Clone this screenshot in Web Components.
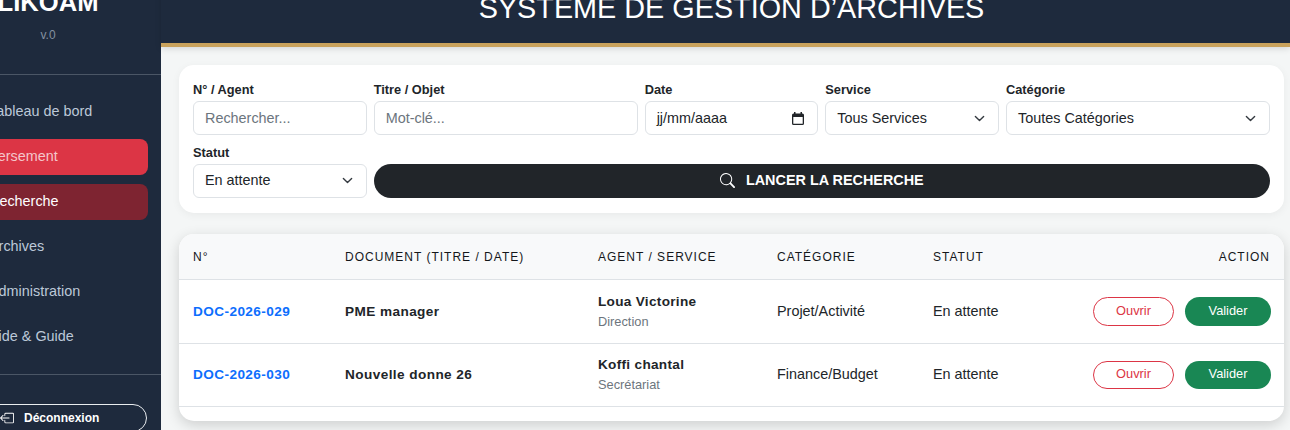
<!DOCTYPE html>
<html lang="fr">
<head>
<meta charset="utf-8">
<title>Système de gestion d'archives</title>
<style>
  html, body { margin: 0; height: 100%; overflow: hidden; background: #f4f6f6; }
  body { font-family: "Liberation Sans", Arial, sans-serif; color: #212529; }
</style>
</head>
<body>

<ar-shell>
  <ar-sidebar slot="side"></ar-sidebar>
  <ar-header slot="head">SYSTÈME DE GESTION D’ARCHIVES</ar-header>
  <ar-search></ar-search>
  <ar-table></ar-table>
</ar-shell>

<script>
// ---------------------------------------------------------------------------
// Helpers
// ---------------------------------------------------------------------------

const define = (tag, markup) => {
  customElements.define(tag, class extends HTMLElement {
    constructor() {
      super();
      this.attachShadow({ mode: 'open' }).innerHTML = markup;
    }
  });
};

const chevron = `<svg slot="icon" width="11" height="11" viewBox="0 0 16 16" fill="none" stroke="#343a40" stroke-width="2" stroke-linecap="round" stroke-linejoin="round"><path d="m2 5 6 6 6-6"/></svg>`;

// ---------------------------------------------------------------------------
// Shell : the page is photographed scrolled, hence the negative margins
// ---------------------------------------------------------------------------

define('ar-shell', `
  <style>
    :host { display: flex; width: calc(100vw + 65px); margin: -30px 0 0 -65px; }
    main { flex: 1; min-width: 0; display: flex; flex-direction: column; }
    .content { display: flex; flex-direction: column; gap: 21px; padding: 18px 6px 0 18px; }
  </style>
  <slot name="side"></slot>
  <main>
    <slot name="head"></slot>
    <div class="content"><slot></slot></div>
  </main>
`);

define('ar-header', `
  <style>
    :host {
      display: block; height: 77px; box-sizing: border-box;
      background: #1e2a3d; border-bottom: 4px solid #c9a25c;
      box-shadow: 0 2px 6px rgba(0,0,0,.12);
      color: #fff; font-size: 28.800px; text-align: center;
      line-height: 34px; padding: 21px 0 0 12px;
    }
  </style>
  <slot></slot>
`);

// ---------------------------------------------------------------------------
// Sidebar
// ---------------------------------------------------------------------------

define('ar-nav-item', `
  <style>
    :host {
      display: block; height: 36px; line-height: 35px; border-radius: 8px;
      padding-left: 29px; font-size: 14.400px; color: #bcc8d8;
    }
    :host([tone="red"]) { background: #dc3545; color: #f4c6cb; }
    :host([tone="dark"]) { background: #7e2431; color: #fff; }
  </style>
  <slot></slot>
`);

define('ar-sidebar', `
  <style>
    :host {
      display: block; flex: 0 0 226px; height: 500px; background: #1e2a3d;
      box-sizing: border-box; overflow: hidden;
    }
    .brand {
      height: 105px; box-sizing: border-box; text-align: center;
      border-bottom: 1px solid #4b5666; padding-top: 18px;
    }
    h1 { margin: 0; font-size: 25.600px; line-height: 28px; font-weight: 700; color: #fff; }
    small { display: block; margin-top: 12px; font-size: 12px; line-height: 14px; color: #8490a0; }
    nav {
      display: flex; flex-direction: column; gap: 9px;
      padding: 19px 13px 19px 25px; border-bottom: 1px solid #4b5666;
    }
    .foot { padding: 29px 14px 0 25px; }
    .logout {
      display: flex; align-items: center; gap: 10px;
      height: 28px; box-sizing: border-box; border: 1px solid #e9ecef; border-radius: 15px;
      color: #fff; font-size: 12px; font-weight: 700; padding-left: 64px; margin-left: -25px;
    }
    svg { flex: none; }
  </style>
  <div class="brand">
    <h1>LIKOAM</h1>
    <small>v.0</small>
  </div>
  <nav>
    <ar-nav-item>Tableau de bord</ar-nav-item>
    <ar-nav-item tone="red">Versement</ar-nav-item>
    <ar-nav-item tone="dark">Recherche</ar-nav-item>
    <ar-nav-item>Archives</ar-nav-item>
    <ar-nav-item>Administration</ar-nav-item>
    <ar-nav-item>Aide &amp; Guide</ar-nav-item>
  </nav>
  <div class="foot">
    <div class="logout">
      <svg width="14" height="14" viewBox="0 0 16 16" fill="#fff"><path d="M6 3.500a.5.5 0 0 1 .5-.5h8a.5.5 0 0 1 .5.5v9a.5.5 0 0 1-.5.5h-8a.5.5 0 0 1-.5-.5v-2a.5.5 0 0 0-1 0v2A1.500 1.500 0 0 0 6.500 14h8a1.500 1.500 0 0 0 1.500-1.500v-9A1.500 1.500 0 0 0 14.500 2h-8A1.500 1.500 0 0 0 5 3.500v2a.5.5 0 0 0 1 0z"/><path d="M.146 8.354a.5.5 0 0 1 0-.708l3-3a.5.5 0 1 1 .708.708L1.707 7.500H10.500a.5.5 0 0 1 0 1H1.707l2.147 2.146a.5.5 0 0 1-.708.708z"/></svg>
      <span>Déconnexion</span>
    </div>
  </div>
`);

// ---------------------------------------------------------------------------
// Search form
// ---------------------------------------------------------------------------

define('ar-field', `
  <style>
    :host { display: flex; flex-direction: column; min-width: 0; }
    :host([span="2"]) { grid-column: span 2; }
    :host([span="3"]) { grid-column: span 3; }
    label { font-size: 12.800px; font-weight: 700; line-height: 14px; padding-top: 1px; margin-bottom: 4px; color: #212529; }
    .box {
      display: flex; align-items: center; justify-content: space-between;
      height: 34px; box-sizing: border-box; padding: 0 13px 0 11px;
      background: #fff; border: 1px solid #dee2e6; border-radius: 6px;
      font-size: 14.400px; color: #212529;
    }
    :host([placeholder]) .box { color: #6c757d; }
    :host([lifted]) .box { padding-bottom: 2px; }
    ::slotted(svg) { display: block; }
  </style>
  <label id="label"></label>
  <div class="box"><slot></slot><slot name="icon"></slot></div>
`);

define('ar-search', `
  <style>
    :host {
      display: grid; grid-template-columns: repeat(12, 1fr); column-gap: 7px; row-gap: 10px;
      background: #fff; border-radius: 15px; padding: 17px 14px 15px;
      box-shadow: 0 2px 8px rgba(0,0,0,.05);
    }
    button {
      grid-column: span 10; align-self: end; height: 34px; border: 0; border-radius: 17px;
      background: #212529; color: #fff; font: 700 14.400px "Liberation Sans", Arial, sans-serif;
      display: flex; align-items: center; justify-content: center; gap: 11px; padding: 0 0 2px;
    }
  </style>
  <ar-field span="2" data-label="N° / Agent" placeholder>Rechercher...</ar-field>
  <ar-field span="3" data-label="Titre / Objet" placeholder>Mot-clé...</ar-field>
  <ar-field span="2" data-label="Date">jj/mm/aaaa<svg slot="icon" width="12" height="13" viewBox="0 0 12 13" fill="#212529" fill-rule="evenodd"><path d="M2 0h1.500v1.500h5V0H10v1.500h.5A1.500 1.500 0 0 1 12 3v8.500a1.500 1.500 0 0 1-1.500 1.500h-9A1.500 1.500 0 0 1 0 11.500V3a1.500 1.500 0 0 1 1.500-1.500H2zM1.300 5v6.400c0 .2.100.3.300.3h8.800c.2 0 .3-.1.300-.3V5z"/></svg></ar-field>
  <ar-field span="2" data-label="Service">Tous Services${chevron}</ar-field>
  <ar-field span="3" data-label="Catégorie">Toutes Catégories${chevron}</ar-field>
  <ar-field span="2" data-label="Statut" lifted>En attente${chevron}</ar-field>
  <button type="button">
    <svg width="15" height="15" viewBox="0 0 16 16" fill="#fff"><path d="M11.742 10.344a6.500 6.500 0 1 0-1.397 1.398h-.001q.044.060.098.115l3.850 3.850a1 1 0 0 0 1.415-1.414l-3.850-3.850a1 1 0 0 0-.115-.100zM12 6.500a5.500 5.500 0 1 1-11 0 5.500 5.500 0 0 1 11 0"/></svg>
    <span>LANCER LA RECHERCHE</span>
  </button>
`);

document.querySelector('ar-search').shadowRoot.querySelectorAll('ar-field').forEach((field) => {
  field.shadowRoot.getElementById('label').textContent = field.dataset.label;
});

// ---------------------------------------------------------------------------
// Results table
// ---------------------------------------------------------------------------

const rows = [
  { id: 'DOC-2026-029', title: 'PME manager', agent: 'Loua Victorine', service: 'Direction', cat: 'Projet/Activité', h: 64, btn: 29, lift: 1, btnLift: 2 },
  { id: 'DOC-2026-030', title: 'Nouvelle donne 26', agent: 'Koffi chantal', service: 'Secrétariat', cat: 'Finance/Budget', h: 63, btn: 28, lift: 2, btnLift: 3 },
];

define('ar-table', `
  <style>
    :host {
      display: block; background: #fff; border-radius: 15px; overflow: hidden;
      padding-bottom: 14px; box-shadow: 0 4px 14px rgba(0,0,0,.16);
    }
    table { width: 100%; border-collapse: collapse; table-layout: fixed; }
    th {
      height: 45px; padding: 0 0 0 14px; background: #f8f9fa; text-align: left;
      font-size: 12px; font-weight: 400; letter-spacing: 1px; color: #14171a;
      border-bottom: 1px solid #dee2e6;
    }
    td { padding: 0 0 1px 14px; font-size: 14.400px; border-bottom: 1px solid #dee2e6; color: #212529; }
    th:last-child { text-align: right; padding-right: 14px; }
    td:last-child { padding: 0 13px 0 0; }
    .id { color: #0d6efd; font-weight: 700; font-size: 13.600px; letter-spacing: .42px; }
    .doc { font-weight: 700; font-size: 13.600px; letter-spacing: .42px; }
    .name { font-weight: 700; font-size: 13.600px; letter-spacing: .3px; line-height: 15px; }
    .svc { font-size: 12.800px; color: #6c757d; line-height: 14px; margin-top: 6px; }
    .acts { display: flex; justify-content: flex-end; gap: 11px; }
    .btn {
      box-sizing: border-box; display: flex; align-items: center; justify-content: center;
      border-radius: 15px; font-size: 12.800px;
    }
    .open { width: 81px; border: 1px solid #dc3545; color: #dc3545; }
    .ok { width: 86px; background: #198754; color: #fff; }
  </style>
  <table>
    <colgroup><col style="width:152px"><col style="width:253px"><col style="width:179px"><col style="width:156px"><col style="width:120px"><col></colgroup>
    <thead><tr><th>N°</th><th>DOCUMENT (TITRE / DATE)</th><th>AGENT / SERVICE</th><th>CATÉGORIE</th><th>STATUT</th><th>ACTION</th></tr></thead>
    <tbody>${rows.map((r) => `
      <tr style="height:${r.h}px">
        <td style="padding-bottom:${r.lift}px"><span class="id">${r.id}</span></td>
        <td style="padding-bottom:${r.lift}px"><span class="doc">${r.title}</span></td>
        <td><div class="name">${r.agent}</div><div class="svc">${r.service}</div></td>
        <td style="padding-bottom:${r.lift}px">${r.cat}</td>
        <td style="padding-bottom:${r.lift}px">En attente</td>
        <td><div class="acts">
          <span class="btn open" style="height:${r.btn}px;padding-bottom:${r.btnLift}px">Ouvrir</span>
          <span class="btn ok" style="height:${r.btn}px;padding-bottom:${r.btnLift}px">Valider</span>
        </div></td>
      </tr>`).join('')}
    </tbody>
  </table>
`);
</script>
</body>
</html>
